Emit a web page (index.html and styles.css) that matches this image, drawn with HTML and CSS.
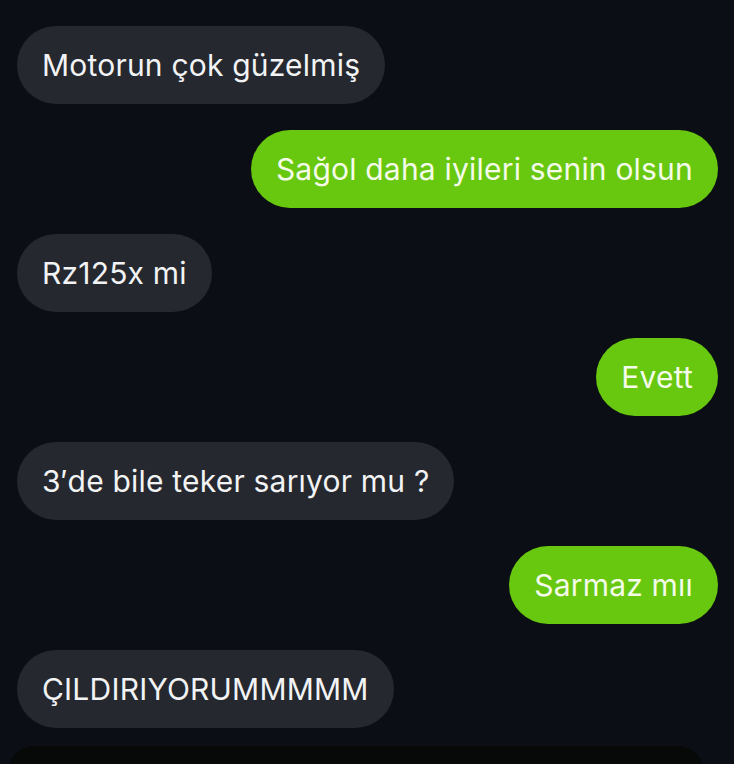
FILE: index.html
```html
<!DOCTYPE html>
<html lang="tr">
<head>
  <meta charset="UTF-8" />
  <meta name="viewport" content="width=device-width, initial-scale=1.0" />
  <title>Sohbet</title>
  <link rel="stylesheet" href="styles.css">
</head>
<body>
  <div class="chat">
    <div class="msg in"><span class="bubble">Motorun çok güzelmiş</span></div>
    <div class="msg out"><span class="bubble">Sağol daha iyileri senin olsun</span></div>
    <div class="msg in"><span class="bubble">Rz125x mi</span></div>
    <div class="msg out"><span class="bubble">Evett</span></div>
    <div class="msg in"><span class="bubble">3′de bile teker sarıyor mu ?</span></div>
    <div class="msg out"><span class="bubble">Sarmaz mıı</span></div>
    <div class="msg in"><span class="bubble">ÇILDIRIYORUMMMMM</span></div>
  </div>
  <div class="composer"></div>
</body>
</html>
```

FILE: styles.css
```css
html, body { margin: 0; height: 100%; }
body {
  background: #0b0f15;
  font-family: Inter, "Liberation Sans", sans-serif;
  color: #f2f3f5;
  overflow: hidden;
}
.chat {
  display: flex;
  flex-direction: column;
  gap: 26px;
  padding: 26px 16px 0 17px;
}
.msg { display: flex; }
.msg.out { justify-content: flex-end; }
.bubble {
  display: inline-flex;
  align-items: center;
  height: 78px;
  padding: 0 25px;
  border-radius: 39px;
  font-size: 30px;
  letter-spacing: 0.2px;
  background: #25282e;
  white-space: nowrap;
}
.out .bubble { background: #68c70f; color: #f4fbe9; }
.composer {
  margin: 18px 30px 0 8px;
  height: 60px;
  background: #070808;
  border-radius: 26px 26px 0 0;
}
```
